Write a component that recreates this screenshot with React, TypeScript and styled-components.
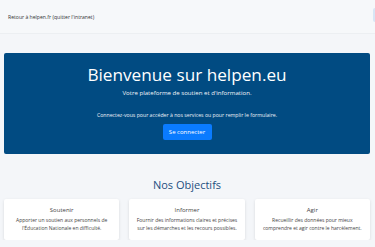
import styled, { createGlobalStyle } from "styled-components";

const GlobalStyle = createGlobalStyle`
  html, body {
    margin: 0;
    padding: 0;
    background: #f4f6f9;
    font-family: "Open Sans", "Noto Sans", sans-serif;
  }
`;

const objectifs = [
  {
    title: "Soutenir",
    text: "Apporter un soutien aux personnels de l'Éducation Nationale en difficulté.",
  },
  {
    title: "Informer",
    text: "Fournir des informations claires et précises sur les démarches et les recours possibles.",
  },
  {
    title: "Agir",
    text: "Recueillir des données pour mieux comprendre et agir contre le harcèlement.",
  },
];

export default function App() {
  return (
    <>
      <GlobalStyle />
      <Header>
        <BackLink href="#">Retour à helpen.fr (quitter l'intranet)</BackLink>
        <EdgeButton />
      </Header>
      <Main>
        <Banner>
          <Title>Bienvenue sur helpen.eu</Title>
          <Subtitle>Votre plateforme de soutien et d'information.</Subtitle>
          <Lead>Connectez-vous pour accéder à nos services ou pour remplir le formulaire.</Lead>
          <LoginButton>Se connecter</LoginButton>
        </Banner>
        <SectionTitle>Nos Objectifs</SectionTitle>
        <Cards>
          {objectifs.map((o) => (
            <Card key={o.title}>
              <CardTitle>{o.title}</CardTitle>
              <CardText>{o.text}</CardText>
            </Card>
          ))}
        </Cards>
      </Main>
    </>
  );
}

const Header = styled.header`
  position: relative;
  height: 33px;
  display: flex;
  align-items: center;
  padding: 0 8px;
  background: #f6f8fa;
  border-bottom: 1px solid #eceff2;
  overflow: hidden;
`;

const BackLink = styled.a`
  font-size: 5.1px;
  font-weight: 400;
  color: #333;
  text-decoration: none;
`;

const EdgeButton = styled.span`
  position: absolute;
  right: -30px;
  top: 8px;
  width: 32px;
  height: 14px;
  border-radius: 2px;
  background: #d8e6f5;
`;

const Main = styled.main`
  padding: 19px 5px 0 4px;
`;

const Banner = styled.section`
  background: #014b82;
  border-radius: 2px;
  height: 101px;
  box-sizing: border-box;
  padding-top: 10px;
  display: flex;
  flex-direction: column;
  align-items: center;
  color: #fff;
`;

const Title = styled.h1`
  margin: 0;
  font-weight: 400;
  font-size: 17.2px;
  line-height: 24px;
`;

const Subtitle = styled.p`
  margin: 2px 0 0;
  font-size: 6.1px;
  font-weight: 400;
  line-height: 8px;
  color: #f2f5f9;
`;

const Lead = styled.p`
  margin: 15px 0 0;
  font-size: 5.2px;
  font-weight: 400;
  line-height: 7px;
  color: #eef2f7;
`;

const LoginButton = styled.button`
  margin-top: 5px;
  width: 49px;
  height: 16px;
  padding: 0;
  border: none;
  border-radius: 2px;
  background: #0a7bff;
  color: #fff;
  font-family: "Open Sans", sans-serif;
  font-weight: 400;
  font-size: 6px;
`;

const SectionTitle = styled.h2`
  margin: 23px 0 0;
  text-align: center;
  font-weight: 400;
  font-size: 11px;
  line-height: 16px;
  color: #1d4f7f;
`;

const Cards = styled.div`
  margin-top: 6px;
  display: grid;
  grid-template-columns: repeat(3, 1fr);
  gap: 10px;
`;

const Card = styled.div`
  background: #fff;
  border-radius: 2px;
  box-shadow: 0 1px 3px rgba(0, 0, 0, 0.12);
  height: 41px;
  box-sizing: border-box;
  padding: 7px 5px 0;
  text-align: center;
`;

const CardTitle = styled.h3`
  margin: 0;
  font-weight: 400;
  font-size: 6px;
  line-height: 8px;
  color: #444;
`;

const CardText = styled.p`
  margin: 3px 0 0;
  font-size: 5px;
  font-weight: 400;
  line-height: 7.5px;
  color: #444;
`;
